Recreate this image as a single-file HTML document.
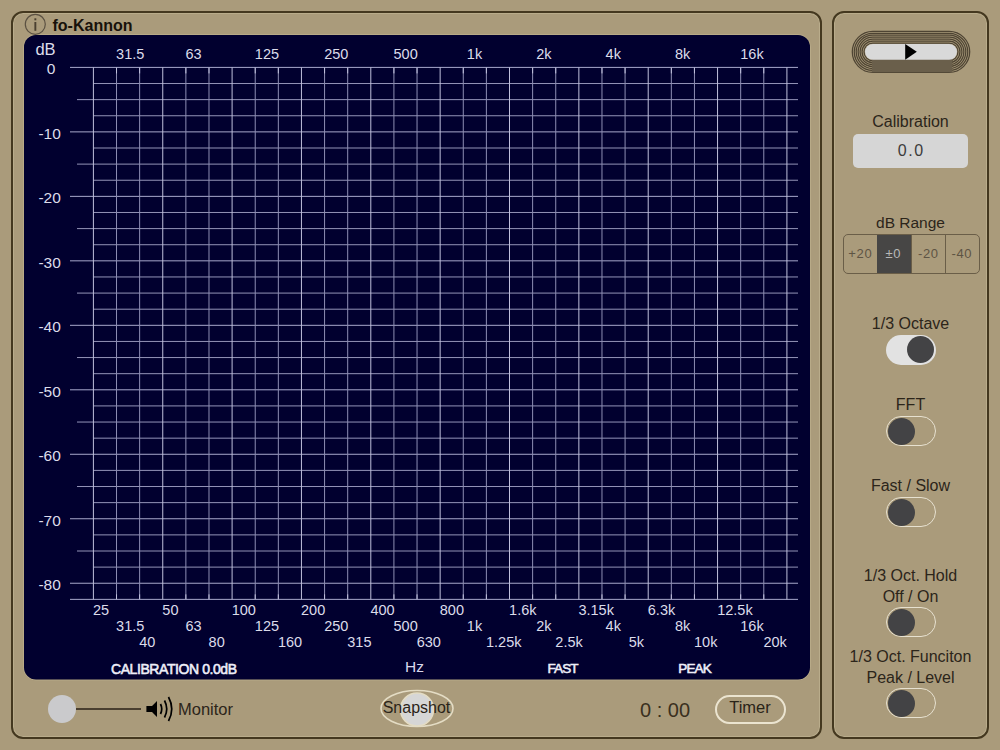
<!DOCTYPE html>
<html><head><meta charset="utf-8">
<style>
html,body{margin:0;padding:0;}
body{width:1000px;height:750px;position:relative;overflow:hidden;background:#aa9b7b;font-family:"Liberation Sans",sans-serif;}
.t{position:absolute;white-space:nowrap;line-height:1;}
.panel{position:absolute;border:2px solid #44381f;border-radius:12px;box-sizing:border-box;box-shadow:inset 0 0 0 1px rgba(200,190,155,0.5);}
</style></head><body>
<div class="panel" style="left:11px;top:10.5px;width:811px;height:728.5px;"></div>
<div class="panel" style="left:832.3px;top:10.5px;width:157.2px;height:728.5px;"></div>
<svg width="1000" height="750" style="position:absolute;left:0;top:0"><rect x="23.5" y="34.5" width="787" height="645.5" rx="12.5" ry="12.5" fill="none" stroke="#c2b693" stroke-opacity="0.55" stroke-width="1"/><rect x="24" y="35" width="786" height="644.5" rx="12" ry="12" fill="#01002f"/><line x1="70" y1="67.40" x2="798" y2="67.40" stroke="#a8a8cc" stroke-width="1"/><line x1="93.4" y1="83.52" x2="798" y2="83.52" stroke="#9494b8" stroke-width="1"/><line x1="77" y1="99.64" x2="798" y2="99.64" stroke="#9494b8" stroke-width="1"/><line x1="93.4" y1="115.76" x2="798" y2="115.76" stroke="#9494b8" stroke-width="1"/><line x1="70" y1="131.88" x2="798" y2="131.88" stroke="#a8a8cc" stroke-width="1"/><line x1="93.4" y1="148.00" x2="798" y2="148.00" stroke="#9494b8" stroke-width="1"/><line x1="77" y1="164.12" x2="798" y2="164.12" stroke="#9494b8" stroke-width="1"/><line x1="93.4" y1="180.24" x2="798" y2="180.24" stroke="#9494b8" stroke-width="1"/><line x1="70" y1="196.36" x2="798" y2="196.36" stroke="#a8a8cc" stroke-width="1"/><line x1="93.4" y1="212.48" x2="798" y2="212.48" stroke="#9494b8" stroke-width="1"/><line x1="77" y1="228.60" x2="798" y2="228.60" stroke="#9494b8" stroke-width="1"/><line x1="93.4" y1="244.72" x2="798" y2="244.72" stroke="#9494b8" stroke-width="1"/><line x1="70" y1="260.84" x2="798" y2="260.84" stroke="#a8a8cc" stroke-width="1"/><line x1="93.4" y1="276.96" x2="798" y2="276.96" stroke="#9494b8" stroke-width="1"/><line x1="77" y1="293.08" x2="798" y2="293.08" stroke="#9494b8" stroke-width="1"/><line x1="93.4" y1="309.20" x2="798" y2="309.20" stroke="#9494b8" stroke-width="1"/><line x1="70" y1="325.32" x2="798" y2="325.32" stroke="#a8a8cc" stroke-width="1"/><line x1="93.4" y1="341.44" x2="798" y2="341.44" stroke="#9494b8" stroke-width="1"/><line x1="77" y1="357.56" x2="798" y2="357.56" stroke="#9494b8" stroke-width="1"/><line x1="93.4" y1="373.68" x2="798" y2="373.68" stroke="#9494b8" stroke-width="1"/><line x1="70" y1="389.80" x2="798" y2="389.80" stroke="#a8a8cc" stroke-width="1"/><line x1="93.4" y1="405.92" x2="798" y2="405.92" stroke="#9494b8" stroke-width="1"/><line x1="77" y1="422.04" x2="798" y2="422.04" stroke="#9494b8" stroke-width="1"/><line x1="93.4" y1="438.16" x2="798" y2="438.16" stroke="#9494b8" stroke-width="1"/><line x1="70" y1="454.28" x2="798" y2="454.28" stroke="#a8a8cc" stroke-width="1"/><line x1="93.4" y1="470.40" x2="798" y2="470.40" stroke="#9494b8" stroke-width="1"/><line x1="77" y1="486.52" x2="798" y2="486.52" stroke="#9494b8" stroke-width="1"/><line x1="93.4" y1="502.64" x2="798" y2="502.64" stroke="#9494b8" stroke-width="1"/><line x1="70" y1="518.76" x2="798" y2="518.76" stroke="#a8a8cc" stroke-width="1"/><line x1="93.4" y1="534.88" x2="798" y2="534.88" stroke="#9494b8" stroke-width="1"/><line x1="77" y1="551.00" x2="798" y2="551.00" stroke="#9494b8" stroke-width="1"/><line x1="93.4" y1="567.12" x2="798" y2="567.12" stroke="#9494b8" stroke-width="1"/><line x1="70" y1="583.24" x2="798" y2="583.24" stroke="#a8a8cc" stroke-width="1"/><line x1="70" y1="599.36" x2="798" y2="599.36" stroke="#a8a8cc" stroke-width="1"/><line x1="93.40" y1="67.4" x2="93.40" y2="599.36" stroke="#c0c0dc" stroke-width="1"/><line x1="116.52" y1="67.4" x2="116.52" y2="599.36" stroke="#8e8eb4" stroke-width="1"/><line x1="116.52" y1="67.4" x2="116.52" y2="73.4" stroke="#c0c0dc" stroke-width="1"/><line x1="116.52" y1="594.36" x2="116.52" y2="599.36" stroke="#c0c0dc" stroke-width="1"/><line x1="139.63" y1="67.4" x2="139.63" y2="599.36" stroke="#8e8eb4" stroke-width="1"/><line x1="139.63" y1="67.4" x2="139.63" y2="73.4" stroke="#c0c0dc" stroke-width="1"/><line x1="139.63" y1="594.36" x2="139.63" y2="599.36" stroke="#c0c0dc" stroke-width="1"/><line x1="162.75" y1="67.4" x2="162.75" y2="599.36" stroke="#c0c0dc" stroke-width="1"/><line x1="185.87" y1="67.4" x2="185.87" y2="599.36" stroke="#8e8eb4" stroke-width="1"/><line x1="185.87" y1="67.4" x2="185.87" y2="73.4" stroke="#c0c0dc" stroke-width="1"/><line x1="185.87" y1="594.36" x2="185.87" y2="599.36" stroke="#c0c0dc" stroke-width="1"/><line x1="208.99" y1="67.4" x2="208.99" y2="599.36" stroke="#8e8eb4" stroke-width="1"/><line x1="208.99" y1="67.4" x2="208.99" y2="73.4" stroke="#c0c0dc" stroke-width="1"/><line x1="208.99" y1="594.36" x2="208.99" y2="599.36" stroke="#c0c0dc" stroke-width="1"/><line x1="232.10" y1="67.4" x2="232.10" y2="599.36" stroke="#c0c0dc" stroke-width="1"/><line x1="255.22" y1="67.4" x2="255.22" y2="599.36" stroke="#8e8eb4" stroke-width="1"/><line x1="255.22" y1="67.4" x2="255.22" y2="73.4" stroke="#c0c0dc" stroke-width="1"/><line x1="255.22" y1="594.36" x2="255.22" y2="599.36" stroke="#c0c0dc" stroke-width="1"/><line x1="278.34" y1="67.4" x2="278.34" y2="599.36" stroke="#8e8eb4" stroke-width="1"/><line x1="278.34" y1="67.4" x2="278.34" y2="73.4" stroke="#c0c0dc" stroke-width="1"/><line x1="278.34" y1="594.36" x2="278.34" y2="599.36" stroke="#c0c0dc" stroke-width="1"/><line x1="301.45" y1="67.4" x2="301.45" y2="599.36" stroke="#c0c0dc" stroke-width="1"/><line x1="324.57" y1="67.4" x2="324.57" y2="599.36" stroke="#8e8eb4" stroke-width="1"/><line x1="324.57" y1="67.4" x2="324.57" y2="73.4" stroke="#c0c0dc" stroke-width="1"/><line x1="324.57" y1="594.36" x2="324.57" y2="599.36" stroke="#c0c0dc" stroke-width="1"/><line x1="347.69" y1="67.4" x2="347.69" y2="599.36" stroke="#8e8eb4" stroke-width="1"/><line x1="347.69" y1="67.4" x2="347.69" y2="73.4" stroke="#c0c0dc" stroke-width="1"/><line x1="347.69" y1="594.36" x2="347.69" y2="599.36" stroke="#c0c0dc" stroke-width="1"/><line x1="370.80" y1="67.4" x2="370.80" y2="599.36" stroke="#c0c0dc" stroke-width="1"/><line x1="393.92" y1="67.4" x2="393.92" y2="599.36" stroke="#8e8eb4" stroke-width="1"/><line x1="393.92" y1="67.4" x2="393.92" y2="73.4" stroke="#c0c0dc" stroke-width="1"/><line x1="393.92" y1="594.36" x2="393.92" y2="599.36" stroke="#c0c0dc" stroke-width="1"/><line x1="417.04" y1="67.4" x2="417.04" y2="599.36" stroke="#8e8eb4" stroke-width="1"/><line x1="417.04" y1="67.4" x2="417.04" y2="73.4" stroke="#c0c0dc" stroke-width="1"/><line x1="417.04" y1="594.36" x2="417.04" y2="599.36" stroke="#c0c0dc" stroke-width="1"/><line x1="440.15" y1="67.4" x2="440.15" y2="599.36" stroke="#c0c0dc" stroke-width="1"/><line x1="463.27" y1="67.4" x2="463.27" y2="599.36" stroke="#8e8eb4" stroke-width="1"/><line x1="463.27" y1="67.4" x2="463.27" y2="73.4" stroke="#c0c0dc" stroke-width="1"/><line x1="463.27" y1="594.36" x2="463.27" y2="599.36" stroke="#c0c0dc" stroke-width="1"/><line x1="486.39" y1="67.4" x2="486.39" y2="599.36" stroke="#8e8eb4" stroke-width="1"/><line x1="486.39" y1="67.4" x2="486.39" y2="73.4" stroke="#c0c0dc" stroke-width="1"/><line x1="486.39" y1="594.36" x2="486.39" y2="599.36" stroke="#c0c0dc" stroke-width="1"/><line x1="509.51" y1="67.4" x2="509.51" y2="599.36" stroke="#c0c0dc" stroke-width="1"/><line x1="532.62" y1="67.4" x2="532.62" y2="599.36" stroke="#8e8eb4" stroke-width="1"/><line x1="532.62" y1="67.4" x2="532.62" y2="73.4" stroke="#c0c0dc" stroke-width="1"/><line x1="532.62" y1="594.36" x2="532.62" y2="599.36" stroke="#c0c0dc" stroke-width="1"/><line x1="555.74" y1="67.4" x2="555.74" y2="599.36" stroke="#8e8eb4" stroke-width="1"/><line x1="555.74" y1="67.4" x2="555.74" y2="73.4" stroke="#c0c0dc" stroke-width="1"/><line x1="555.74" y1="594.36" x2="555.74" y2="599.36" stroke="#c0c0dc" stroke-width="1"/><line x1="578.86" y1="67.4" x2="578.86" y2="599.36" stroke="#c0c0dc" stroke-width="1"/><line x1="601.97" y1="67.4" x2="601.97" y2="599.36" stroke="#8e8eb4" stroke-width="1"/><line x1="601.97" y1="67.4" x2="601.97" y2="73.4" stroke="#c0c0dc" stroke-width="1"/><line x1="601.97" y1="594.36" x2="601.97" y2="599.36" stroke="#c0c0dc" stroke-width="1"/><line x1="625.09" y1="67.4" x2="625.09" y2="599.36" stroke="#8e8eb4" stroke-width="1"/><line x1="625.09" y1="67.4" x2="625.09" y2="73.4" stroke="#c0c0dc" stroke-width="1"/><line x1="625.09" y1="594.36" x2="625.09" y2="599.36" stroke="#c0c0dc" stroke-width="1"/><line x1="648.21" y1="67.4" x2="648.21" y2="599.36" stroke="#c0c0dc" stroke-width="1"/><line x1="671.33" y1="67.4" x2="671.33" y2="599.36" stroke="#8e8eb4" stroke-width="1"/><line x1="671.33" y1="67.4" x2="671.33" y2="73.4" stroke="#c0c0dc" stroke-width="1"/><line x1="671.33" y1="594.36" x2="671.33" y2="599.36" stroke="#c0c0dc" stroke-width="1"/><line x1="694.44" y1="67.4" x2="694.44" y2="599.36" stroke="#8e8eb4" stroke-width="1"/><line x1="694.44" y1="67.4" x2="694.44" y2="73.4" stroke="#c0c0dc" stroke-width="1"/><line x1="694.44" y1="594.36" x2="694.44" y2="599.36" stroke="#c0c0dc" stroke-width="1"/><line x1="717.56" y1="67.4" x2="717.56" y2="599.36" stroke="#c0c0dc" stroke-width="1"/><line x1="740.68" y1="67.4" x2="740.68" y2="599.36" stroke="#8e8eb4" stroke-width="1"/><line x1="740.68" y1="67.4" x2="740.68" y2="73.4" stroke="#c0c0dc" stroke-width="1"/><line x1="740.68" y1="594.36" x2="740.68" y2="599.36" stroke="#c0c0dc" stroke-width="1"/><line x1="763.79" y1="67.4" x2="763.79" y2="599.36" stroke="#8e8eb4" stroke-width="1"/><line x1="763.79" y1="67.4" x2="763.79" y2="73.4" stroke="#c0c0dc" stroke-width="1"/><line x1="763.79" y1="594.36" x2="763.79" y2="599.36" stroke="#c0c0dc" stroke-width="1"/><line x1="786.91" y1="67.4" x2="786.91" y2="599.36" stroke="#c0c0dc" stroke-width="1"/></svg>
<div class="t" style="left:116.117px;top:47px;font-size:14.5px;color:#dcdcea;font-weight:normal;">31.5</div><div class="t" style="left:185.468px;top:47px;font-size:14.5px;color:#dcdcea;font-weight:normal;">63</div><div class="t" style="left:254.81900000000002px;top:47px;font-size:14.5px;color:#dcdcea;font-weight:normal;">125</div><div class="t" style="left:324.1700000000001px;top:47px;font-size:14.5px;color:#dcdcea;font-weight:normal;">250</div><div class="t" style="left:393.5210000000001px;top:47px;font-size:14.5px;color:#dcdcea;font-weight:normal;">500</div><div class="t" style="left:466.87200000000007px;top:47px;font-size:14.5px;color:#dcdcea;font-weight:normal;">1k</div><div class="t" style="left:536.2230000000001px;top:47px;font-size:14.5px;color:#dcdcea;font-weight:normal;">2k</div><div class="t" style="left:605.5740000000001px;top:47px;font-size:14.5px;color:#dcdcea;font-weight:normal;">4k</div><div class="t" style="left:674.9250000000001px;top:47px;font-size:14.5px;color:#dcdcea;font-weight:normal;">8k</div><div class="t" style="left:740.2760000000001px;top:47px;font-size:14.5px;color:#dcdcea;font-weight:normal;">16k</div><div class="t" style="left:93.0px;top:603.0px;font-size:14.5px;color:#dcdcea;font-weight:normal;">25</div><div class="t" style="left:116.117px;top:619.2px;font-size:14.5px;color:#dcdcea;font-weight:normal;">31.5</div><div class="t" style="left:139.234px;top:635.4px;font-size:14.5px;color:#dcdcea;font-weight:normal;">40</div><div class="t" style="left:162.351px;top:603.0px;font-size:14.5px;color:#dcdcea;font-weight:normal;">50</div><div class="t" style="left:185.468px;top:619.2px;font-size:14.5px;color:#dcdcea;font-weight:normal;">63</div><div class="t" style="left:208.585px;top:635.4px;font-size:14.5px;color:#dcdcea;font-weight:normal;">80</div><div class="t" style="left:231.702px;top:603.0px;font-size:14.5px;color:#dcdcea;font-weight:normal;">100</div><div class="t" style="left:254.81900000000002px;top:619.2px;font-size:14.5px;color:#dcdcea;font-weight:normal;">125</div><div class="t" style="left:277.93600000000004px;top:635.4px;font-size:14.5px;color:#dcdcea;font-weight:normal;">160</div><div class="t" style="left:301.053px;top:603.0px;font-size:14.5px;color:#dcdcea;font-weight:normal;">200</div><div class="t" style="left:324.1700000000001px;top:619.2px;font-size:14.5px;color:#dcdcea;font-weight:normal;">250</div><div class="t" style="left:347.28700000000003px;top:635.4px;font-size:14.5px;color:#dcdcea;font-weight:normal;">315</div><div class="t" style="left:370.404px;top:603.0px;font-size:14.5px;color:#dcdcea;font-weight:normal;">400</div><div class="t" style="left:393.5210000000001px;top:619.2px;font-size:14.5px;color:#dcdcea;font-weight:normal;">500</div><div class="t" style="left:416.63800000000003px;top:635.4px;font-size:14.5px;color:#dcdcea;font-weight:normal;">630</div><div class="t" style="left:439.755px;top:603.0px;font-size:14.5px;color:#dcdcea;font-weight:normal;">800</div><div class="t" style="left:466.87200000000007px;top:619.2px;font-size:14.5px;color:#dcdcea;font-weight:normal;">1k</div><div class="t" style="left:485.98900000000003px;top:635.4px;font-size:14.5px;color:#dcdcea;font-weight:normal;">1.25k</div><div class="t" style="left:509.106px;top:603.0px;font-size:14.5px;color:#dcdcea;font-weight:normal;">1.6k</div><div class="t" style="left:536.2230000000001px;top:619.2px;font-size:14.5px;color:#dcdcea;font-weight:normal;">2k</div><div class="t" style="left:555.34px;top:635.4px;font-size:14.5px;color:#dcdcea;font-weight:normal;">2.5k</div><div class="t" style="left:578.457px;top:603.0px;font-size:14.5px;color:#dcdcea;font-weight:normal;">3.15k</div><div class="t" style="left:605.5740000000001px;top:619.2px;font-size:14.5px;color:#dcdcea;font-weight:normal;">4k</div><div class="t" style="left:628.691px;top:635.4px;font-size:14.5px;color:#dcdcea;font-weight:normal;">5k</div><div class="t" style="left:647.808px;top:603.0px;font-size:14.5px;color:#dcdcea;font-weight:normal;">6.3k</div><div class="t" style="left:674.9250000000001px;top:619.2px;font-size:14.5px;color:#dcdcea;font-weight:normal;">8k</div><div class="t" style="left:694.042px;top:635.4px;font-size:14.5px;color:#dcdcea;font-weight:normal;">10k</div><div class="t" style="left:717.159px;top:603.0px;font-size:14.5px;color:#dcdcea;font-weight:normal;">12.5k</div><div class="t" style="left:740.2760000000001px;top:619.2px;font-size:14.5px;color:#dcdcea;font-weight:normal;">16k</div><div class="t" style="left:763.393px;top:635.4px;font-size:14.5px;color:#dcdcea;font-weight:normal;">20k</div><div class="t" style="left:-54.5px;top:41px;width:200px;text-align:center;font-size:16.5px;color:#dcdcea;font-weight:normal;">dB</div><div class="t" style="left:-49px;top:61.2px;width:200px;text-align:center;font-size:15.5px;color:#dcdcea;font-weight:normal;">0</div><div class="t" style="left:-50.4px;top:125.67999999999999px;width:200px;text-align:center;font-size:15.5px;color:#dcdcea;font-weight:normal;">-10</div><div class="t" style="left:-50.4px;top:190.16000000000003px;width:200px;text-align:center;font-size:15.5px;color:#dcdcea;font-weight:normal;">-20</div><div class="t" style="left:-50.4px;top:254.64000000000004px;width:200px;text-align:center;font-size:15.5px;color:#dcdcea;font-weight:normal;">-30</div><div class="t" style="left:-50.4px;top:319.12000000000006px;width:200px;text-align:center;font-size:15.5px;color:#dcdcea;font-weight:normal;">-40</div><div class="t" style="left:-50.4px;top:383.6000000000001px;width:200px;text-align:center;font-size:15.5px;color:#dcdcea;font-weight:normal;">-50</div><div class="t" style="left:-50.4px;top:448.08px;width:200px;text-align:center;font-size:15.5px;color:#dcdcea;font-weight:normal;">-60</div><div class="t" style="left:-50.4px;top:512.56px;width:200px;text-align:center;font-size:15.5px;color:#dcdcea;font-weight:normal;">-70</div><div class="t" style="left:-50.4px;top:577.04px;width:200px;text-align:center;font-size:15.5px;color:#dcdcea;font-weight:normal;">-80</div><div class="t" style="left:74px;top:661.5px;width:200px;text-align:center;font-size:14px;color:#eeeef8;font-weight:normal;-webkit-text-stroke:0.55px #eeeef8;letter-spacing:-0.42px;text-indent:-0.42px">CALIBRATION 0.0dB</div><div class="t" style="left:314.5px;top:659.2px;width:200px;text-align:center;font-size:15.5px;color:#d8d8ec;font-weight:normal;">Hz</div><div class="t" style="left:463px;top:662px;width:200px;text-align:center;font-size:13.5px;color:#eeeef8;font-weight:normal;-webkit-text-stroke:0.55px #eeeef8;letter-spacing:-0.9px;text-indent:-0.9px">FAST</div><div class="t" style="left:595px;top:662px;width:200px;text-align:center;font-size:13.5px;color:#eeeef8;font-weight:normal;-webkit-text-stroke:0.55px #eeeef8;letter-spacing:-0.9px;text-indent:-0.9px">PEAK</div>
<!-- title -->
<svg style="position:absolute;left:24px;top:13px" width="24" height="24" viewBox="0 0 24 24">
<circle cx="11.3" cy="11.3" r="10" fill="none" stroke="#5b5142" stroke-width="1.2"/>
<rect x="10.4" y="5.3" width="1.9" height="2" fill="#4a4030"/>
<rect x="10.4" y="9" width="1.9" height="8.8" fill="#4a4030"/>
</svg>
<div class="t" style="left:52.5px;top:18px;font-size:16px;font-weight:bold;color:#17110a;">fo-Kannon</div>

<!-- play button -->
<svg style="position:absolute;left:840px;top:20px" width="140" height="60" viewBox="0 0 140 60">
<g fill="none" stroke="#4e4433" stroke-width="1.25">
<rect x="24.00" y="23.00" width="94.00" height="17.70" rx="8.85" ry="8.85"/>
<rect x="22.05" y="21.05" width="97.90" height="21.60" rx="10.80" ry="10.80"/>
<rect x="20.10" y="19.10" width="101.80" height="25.50" rx="12.75" ry="12.75"/>
<rect x="18.15" y="17.15" width="105.70" height="29.40" rx="14.70" ry="14.70"/>
<rect x="16.20" y="15.20" width="109.60" height="33.30" rx="16.65" ry="16.65"/>
<rect x="14.25" y="13.25" width="113.50" height="37.20" rx="18.60" ry="18.60"/>
<rect x="12.30" y="11.30" width="117.40" height="41.10" rx="20.55" ry="20.55"/>
</g>
<rect x="31.85" y="38.70" width="80.30" height="13.50" fill="#6a5f4b"/>
<rect x="25.00" y="24.00" width="92.00" height="15.70" rx="7.85" ry="7.85" fill="#d9d9d9"/>
<path d="M65.20000000000005 24.00 L76.79999999999995 31.85 L65.20000000000005 39.70 Z" fill="#000"/>
</svg>

<!-- Calibration -->
<div class="t" style="left:810.5px;width:200px;text-align:center;top:114px;font-size:16px;color:#2c251a;">Calibration</div>
<div style="position:absolute;left:853px;top:134px;width:115px;height:34px;border-radius:5px;background:#d6d6d6;"></div>
<div class="t" style="left:810.5px;width:200px;text-align:center;top:143px;font-size:16px;color:#3c3c3c;letter-spacing:1.6px;text-indent:1.6px;">0.0</div>

<!-- dB range -->
<div class="t" style="left:810.5px;width:200px;text-align:center;top:215px;font-size:15.5px;color:#2c251a;">dB Range</div>
<div style="position:absolute;left:843px;top:234px;width:137px;height:40px;box-sizing:border-box;border:1.5px solid #6a5e48;border-radius:5px;overflow:hidden;">
 <div style="position:absolute;left:32.5px;top:0;width:34px;height:100%;background:#474645;"></div>
 <div style="position:absolute;left:66.5px;top:0;width:1.6px;height:100%;background:#6a5e48;"></div>
 <div style="position:absolute;left:100.5px;top:0;width:1.6px;height:100%;background:#6a5e48;"></div>
 <div class="t" style="left:0;width:32px;text-align:center;top:12.4px;font-size:13px;letter-spacing:0.7px;text-indent:0.7px;color:#5e5444;">+20</div>
 <div class="t" style="left:32px;width:34px;text-align:center;top:12.4px;font-size:13px;letter-spacing:0.7px;text-indent:0.7px;color:#b8b8b8;">&plusmn;0</div>
 <div class="t" style="left:68px;width:32px;text-align:center;top:12.4px;font-size:13px;letter-spacing:0.7px;text-indent:0.7px;color:#5e5444;">-20</div>
 <div class="t" style="left:102px;width:31px;text-align:center;top:12.4px;font-size:13px;letter-spacing:0.7px;text-indent:0.7px;color:#5e5444;">-40</div>
</div>

<!-- toggles -->
<div class="t" style="left:810.5px;width:200px;text-align:center;top:316px;font-size:16px;color:#2c251a;">1/3 Octave</div>
<div style="position:absolute;left:886px;top:335px;width:50px;height:30px;border-radius:15px;background:#e2e2e2;"></div>
<div style="position:absolute;left:907px;top:336px;width:27px;height:27px;border-radius:50%;background:#434345;"></div>

<div class="t" style="left:810.5px;width:200px;text-align:center;top:397px;font-size:16px;color:#2c251a;">FFT</div>
<div style="position:absolute;left:886px;top:416px;width:50px;height:30px;border-radius:15px;box-sizing:border-box;border:1.7px solid #e7e1d0;"></div>
<div style="position:absolute;left:887.5px;top:417.5px;width:27px;height:27px;border-radius:50%;background:#434345;"></div>

<div class="t" style="left:810.5px;width:200px;text-align:center;top:478px;font-size:16px;color:#2c251a;">Fast / Slow</div>
<div style="position:absolute;left:886px;top:497px;width:50px;height:30px;border-radius:15px;box-sizing:border-box;border:1.7px solid #e7e1d0;"></div>
<div style="position:absolute;left:887.5px;top:498.5px;width:27px;height:27px;border-radius:50%;background:#434345;"></div>

<div class="t" style="left:810.5px;width:200px;text-align:center;top:568px;font-size:16px;color:#2c251a;">1/3 Oct. Hold</div>
<div class="t" style="left:810.5px;width:200px;text-align:center;top:589px;font-size:16px;color:#2c251a;">Off / On</div>
<div style="position:absolute;left:886px;top:607px;width:50px;height:30px;border-radius:15px;box-sizing:border-box;border:1.7px solid #e7e1d0;"></div>
<div style="position:absolute;left:887.5px;top:608.5px;width:27px;height:27px;border-radius:50%;background:#434345;"></div>

<div class="t" style="left:810.5px;width:200px;text-align:center;top:649px;font-size:16px;color:#2c251a;">1/3 Oct. Funciton</div>
<div class="t" style="left:810.5px;width:200px;text-align:center;top:670px;font-size:16px;color:#2c251a;">Peak / Level</div>
<div style="position:absolute;left:886px;top:688px;width:50px;height:30px;border-radius:15px;box-sizing:border-box;border:1.7px solid #e7e1d0;"></div>
<div style="position:absolute;left:887.5px;top:689.5px;width:27px;height:27px;border-radius:50%;background:#434345;"></div>

<!-- bottom bar -->
<div style="position:absolute;left:76px;top:708px;width:65px;height:1.8px;background:#4a3f30;"></div>
<div style="position:absolute;left:48px;top:695px;width:28px;height:28px;border-radius:50%;background:#cacacc;"></div>
<svg style="position:absolute;left:144px;top:695px" width="32" height="28" viewBox="0 0 32 28">
<path d="M2.4 11 H8 L13 6 V22 L8 17 H2.4 Z" fill="#000"/>
<g fill="none" stroke="#000" stroke-width="1.7">
<path d="M16.5 9 Q19 14 16.5 19"/>
<path d="M20.5 5.5 Q25 14 20.5 22.5"/>
<path d="M24.5 2 Q31 14 24.5 26"/>
</g>
</svg>
<div class="t" style="left:178px;top:701px;font-size:16.5px;color:#2c251a;">Monitor</div>

<svg style="position:absolute;left:378px;top:688px" width="78" height="42" viewBox="0 0 78 42">
<ellipse cx="39" cy="20.5" rx="36" ry="18" fill="none" stroke="#e4dcc4" stroke-width="1.6"/>
<circle cx="39" cy="21.5" r="16.5" fill="#d6d6d6" stroke="#e4dcc4" stroke-width="1.6"/>
</svg>
<div class="t" style="left:316.5px;width:200px;text-align:center;top:699.5px;font-size:16px;color:#2a2418;">Snapshot</div>

<div class="t" style="left:640px;top:700px;font-size:20px;color:#3a3020;">0 : 00</div>
<div style="position:absolute;left:714.5px;top:694.5px;width:71px;height:29px;box-sizing:border-box;border:2px solid #ebe4d0;border-radius:15px;"></div>
<div class="t" style="left:650px;width:200px;text-align:center;top:699px;font-size:16.5px;color:#2a2418;">Timer</div>

</body></html>
